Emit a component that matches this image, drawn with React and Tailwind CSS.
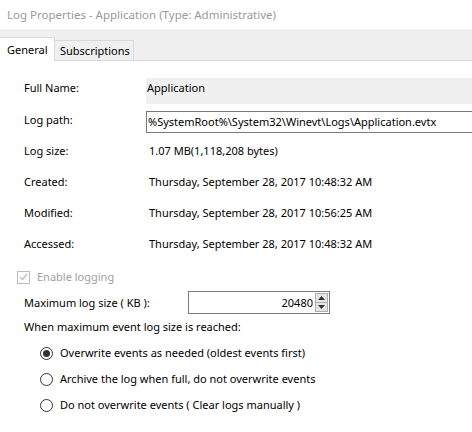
export default function App() {
  const row = (label, value) => (
    <div className="flex h-[31px] items-center">
      <div className="w-[125px]">{label}</div>
      <div>{value}</div>
    </div>
  );

  const radio = (label, checked) => (
    <div className="flex h-[26px] items-center pl-[40px]">
      <span className="flex h-[13px] w-[13px] items-center justify-center rounded-full border border-[#333] bg-white">
        {checked && <span className="h-[7px] w-[7px] rounded-full bg-[#333]" />}
      </span>
      <span className="pl-[7px]">{label}</span>
    </div>
  );

  return (
    <div
      className="w-[472px] h-[432px] overflow-hidden bg-white text-[11px] leading-[16px] text-black"
      style={{ fontFamily: '"Noto Sans", sans-serif' }}
    >
      {/* TITLE */}
      <div className="flex h-[29px] items-center pl-[7px] text-[11.5px] text-[#999]">
        Log Properties - Application (Type: Administrative)
      </div>

      {/* TABS */}
      <div className="flex h-[32px] items-end border-b border-[#d9d9d9] bg-[#f0f0f0]">
        <div className="relative -mb-px flex h-[24px] w-[55px] items-center border-r border-t border-[#d9d9d9] bg-white pl-[7px]">
          General
        </div>
        <div className="flex h-[20px] w-[79px] items-center border-r border-t border-[#d9d9d9] pl-[5px]">
          Subscriptions
        </div>
      </div>

      {/* DETAILS */}
      <div className="pl-[24px] pt-[17px]">
        <div className="flex h-[26px]">
          <div className="w-[122px] pt-[2px]">Full Name:</div>
          <div className="flex-1 bg-[#f0f0f0] pl-[1px] pt-[2px]">Application</div>
        </div>

        <div className="mt-[7px] flex h-[22px] items-center">
          <div className="-mt-[4px] w-[122px]">Log path:</div>
          <div className="-mr-[10px] flex h-[22px] flex-1 items-center border border-[#7a7a7a] pl-[1px]">
            %SystemRoot%\System32\Winevt\Logs\Application.evtx
          </div>
        </div>

        <div className="mt-[2px]">
          {row("Log size:", "1.07 MB(1,118,208 bytes)")}
          {row("Created:", "Thursday, September 28, 2017 10:48:32 AM")}
          {row("Modified:", "Thursday, September 28, 2017 10:56:25 AM")}
          {row("Accessed:", "Thursday, September 28, 2017 10:48:32 AM")}
        </div>
      </div>

      {/* LOGGING */}
      <div className="mt-[10px] flex h-[16px] items-center pl-[17px] text-[#a0a0a0]">
        <span className="flex h-[13px] w-[13px] items-center justify-center border border-[#bcbcbc]">
          <svg width="9" height="8" viewBox="0 0 9 8">
            <path d="M1 4 L3.5 6.5 L8 1" fill="none" stroke="#bcbcbc" strokeWidth="1.2" />
          </svg>
        </span>
        <span className="pl-[7px]">Enable logging</span>
      </div>

      <div className="mt-[6px] flex h-[23px] items-center pl-[24px]">
        <div className="w-[164px]">Maximum log size ( KB ):</div>
        <div className="flex h-[23px] w-[142px] items-center border border-[#7a7a7a]">
          <div className="flex-1 pr-[2px] text-right">20480</div>
          <div className="mr-px flex h-[19px] w-[13px] flex-col">
            <div className="flex h-[10px] items-center justify-center border border-[#adadad] bg-[#e5e5e5]">
              <svg width="7" height="4" viewBox="0 0 7 4"><path d="M0 4 L3.5 0 L7 4 Z" fill="#333" /></svg>
            </div>
            <div className="flex h-[9px] items-center justify-center border border-t-0 border-[#adadad] bg-[#e5e5e5]">
              <svg width="7" height="4" viewBox="0 0 7 4"><path d="M0 0 L3.5 4 L7 0 Z" fill="#333" /></svg>
            </div>
          </div>
        </div>
      </div>

      <div className="mt-[5px] flex h-[16px] items-center pl-[24px]">
        When maximum event log size is reached:
      </div>

      <div className="mt-[5px]">
        {radio("Overwrite events as needed (oldest events first)", true)}
        {radio("Archive the log when full, do not overwrite events", false)}
        {radio("Do not overwrite events ( Clear logs manually )", false)}
      </div>
    </div>
  );
}
